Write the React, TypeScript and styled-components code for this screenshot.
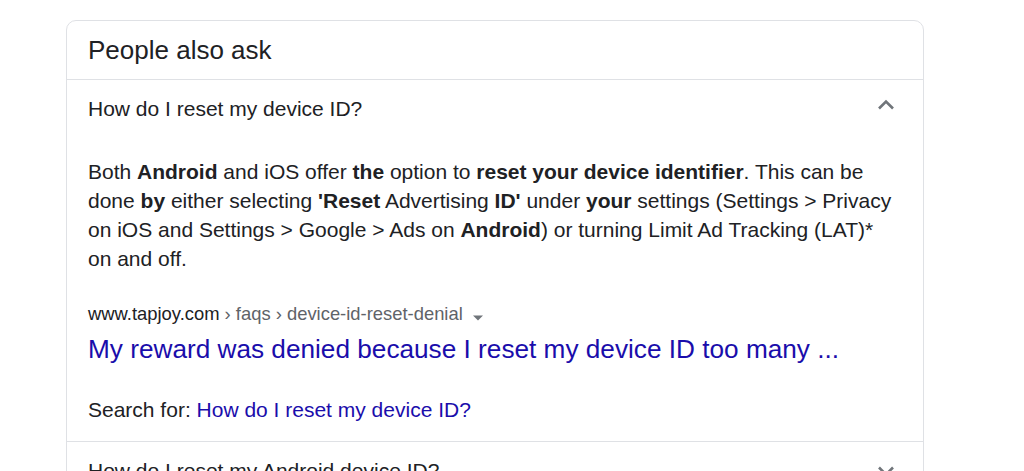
import { FC } from "react";
import { styled, createGlobalStyle } from "styled-components";

const GlobalStyle = createGlobalStyle`
  html, body {
    margin: 0;
    padding: 0;
    background: #ffffff;
  }
  body {
    font-family: "Liberation Sans", Arial, sans-serif;
    color: #202124;
  }
`;

const Page = styled.div`
  width: 1024px;
  height: 471px;
  overflow: hidden;
  padding: 20px 0 0 66px;
  box-sizing: border-box;
`;

const Card = styled.div`
  width: 858px;
  border: 1px solid #dfe1e5;
  border-radius: 10px;
  box-sizing: border-box;
`;

const Heading = styled.div`
  height: 58px;
  display: flex;
  align-items: center;
  padding: 0 21px;
  font-size: 26px;
  line-height: 32px;
  color: #202124;
  border-bottom: 1px solid #dfe1e5;
`;

const Item = styled.div<{ $last?: boolean }>`
  border-bottom: ${({ $last }) => ($last ? "none" : "1px solid #dfe1e5")};
`;

const Question = styled.div`
  height: 58px;
  display: flex;
  align-items: center;
  justify-content: space-between;
  padding: 0 21px;
  font-size: 21px;
  color: #202124;
`;

const Chevron = styled.svg<{ $open?: boolean }>`
  width: 20px;
  height: 20px;
  margin-right: 6px;
  margin-top: ${({ $open }) => ($open ? "-8px" : "0")};
  transform: ${({ $open }) => ($open ? "rotate(180deg)" : "none")};
  flex-shrink: 0;
`;

const Answer = styled.div`
  padding: 0 21px 19px;
`;

const Snippet = styled.p`
  margin: 19px 0 0;
  font-size: 21px;
  line-height: 29px;
  color: #202124;
  b {
    font-weight: 700;
  }
`;

const Source = styled.div`
  margin-top: 29px;
  font-size: 18.4px;
  line-height: 24px;
  color: #5f6368;
  display: flex;
  align-items: center;
  .domain {
    color: #202124;
  }
`;

const Caret = styled.svg`
  width: 12px;
  height: 8px;
  margin-left: 9px;
  margin-top: 8px;
`;

const TitleLink = styled.a`
  display: block;
  margin-top: 7px;
  font-size: 26.2px;
  line-height: 32px;
  color: #1a0dab;
  text-decoration: none;
`;

const SearchFor = styled.div`
  margin-top: 33px;
  font-size: 21px;
  line-height: 24px;
  color: #202124;
  a {
    color: #1a0dab;
    text-decoration: none;
  }
`;

const ChevronIcon: FC<{ open?: boolean }> = ({ open }) => (
  <Chevron $open={open} viewBox="0 0 20 20">
    <path
      d="M3 6.5 L10 13.5 L17 6.5"
      fill="none"
      stroke="#70757a"
      strokeWidth="2.6"
    />
  </Chevron>
);

const App: FC = () => {
  return (
    <>
      <GlobalStyle />
      <Page>
        <Card>
          <Heading>People also ask</Heading>
          <Item>
            <Question>
              <span>How do I reset my device ID?</span>
              <ChevronIcon open />
            </Question>
            <Answer>
              <Snippet>
                Both <b>Android</b> and iOS offer <b>the</b> option to{" "}
                <b>reset your device identifier</b>. This can be done{" "}
                <b>by</b> either selecting <b>'Reset</b> Advertising{" "}
                <b>ID'</b> under <b>your</b> settings (Settings &gt; Privacy
                on iOS and Settings &gt; Google &gt; Ads on <b>Android</b>) or
                turning Limit Ad Tracking (LAT)* on and off.
              </Snippet>
              <Source>
                <span className="domain">www.tapjoy.com</span>
                &nbsp;›&nbsp;faqs&nbsp;›&nbsp;device-id-reset-denial
                <Caret viewBox="0 0 12 8">
                  <path d="M1 1.5 L11 1.5 L6 6.5 Z" fill="#70757a" />
                </Caret>
              </Source>
              <TitleLink href="#">
                My reward was denied because I reset my device ID too many ...
              </TitleLink>
              <SearchFor>
                Search for: <a href="#">How do I reset my device ID?</a>
              </SearchFor>
            </Answer>
          </Item>
          <Item $last>
            <Question>
              <span>How do I reset my Android device ID?</span>
              <ChevronIcon />
            </Question>
          </Item>
        </Card>
      </Page>
    </>
  );
};

export default App;
